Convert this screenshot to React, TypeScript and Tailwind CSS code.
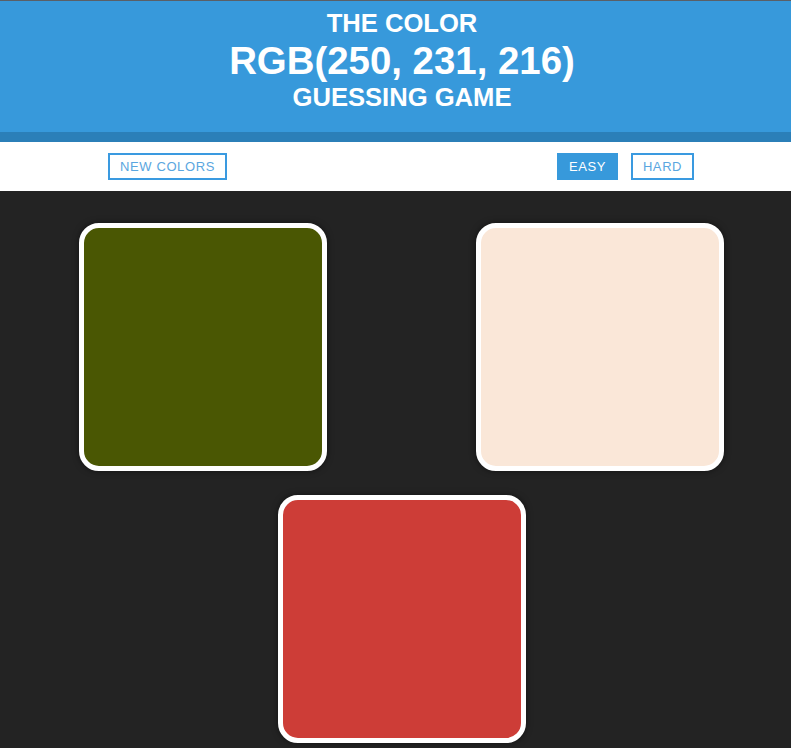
import React from 'react';

const squares = ['#4a5703', '#fae7d8', '#cd3d37'];

export default function App() {
  return (
    <div className="min-h-screen bg-[#232323] font-['Liberation_Sans',Arial,sans-serif]">
      {/* Header */}
      <div className="border-t border-[#5a5f66] bg-[#3799db] pb-[20px] pl-[13px] pt-[7px] text-center font-bold uppercase text-white">
        <div className="text-[25.6px] leading-[30px]">The Color</div>
        <div className="text-[38.4px] leading-[45px]">RGB(250, 231, 216)</div>
        <div className="text-[25.6px] leading-[29px]">Guessing Game</div>
      </div>
      <div className="h-[10px] bg-[#2b7fb8]" />

      {/* Controls */}
      <div className="flex h-[49px] items-center justify-between bg-white pl-[108px] pr-[97px]">
        <button className="h-[27px] w-[119px] border-2 border-[#3a9ae0] text-[13px] uppercase tracking-[0.6px] text-[#5aa6e0]">
          New Colors
        </button>
        <div className="flex gap-[13px]">
          <button className="h-[27px] w-[61px] bg-[#3799db] text-[13px] uppercase tracking-[0.6px] text-white">
            Easy
          </button>
          <button className="h-[27px] w-[63px] border-2 border-[#3a9ae0] text-[13px] uppercase tracking-[0.6px] text-[#5aa6e0]">
            Hard
          </button>
        </div>
      </div>

      {/* Squares */}
      <div className="ml-[79px] flex w-[645px] flex-wrap justify-center gap-x-[149px] gap-y-[24px] pt-[32px] pb-[5px]">
        {squares.map((c) => (
          <div
            key={c}
            className="h-[248px] w-[248px] rounded-[20px] border-[5px] border-white shadow-[0_0_6px_rgba(0,0,0,0.5)]"
            style={{ backgroundColor: c }}
          />
        ))}
      </div>
    </div>
  );
}
